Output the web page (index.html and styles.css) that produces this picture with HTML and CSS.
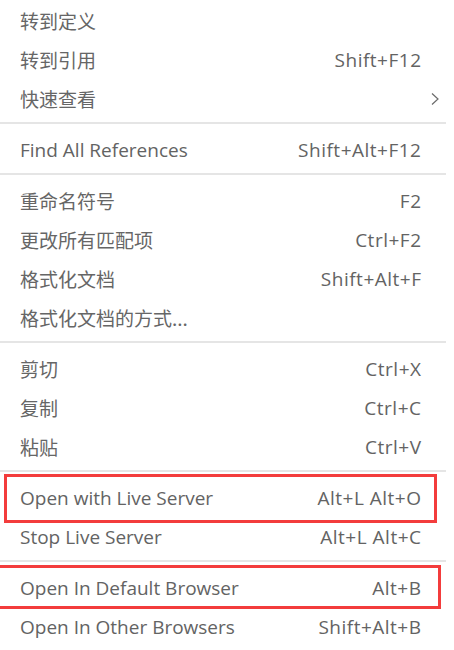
FILE: index.html
```html
<!DOCTYPE html>
<html lang="zh-CN">
<head>
<meta charset="utf-8">
<link rel="stylesheet" href="styles.css">
</head>
<body>
<div class="menu">
  <div class="item"><span class="label cjk">转到定义</span><span class="key"></span></div>
  <div class="item"><span class="label cjk">转到引用</span><span class="key">Shift+F12</span></div>
  <div class="item"><span class="label cjk">快速查看</span><span class="chev"><svg width="10" height="14" viewBox="0 0 10 14"><path d="M2 1.5 L8 7 L2 12.5" fill="none" stroke="#6b6b6b" stroke-width="1.2"/></svg></span></div>
  <div class="sep"></div>
  <div class="item"><span class="label">Find All References</span><span class="key">Shift+Alt+F12</span></div>
  <div class="sep"></div>
  <div class="item"><span class="label cjk">重命名符号</span><span class="key">F2</span></div>
  <div class="item"><span class="label cjk">更改所有匹配项</span><span class="key">Ctrl+F2</span></div>
  <div class="item"><span class="label cjk">格式化文档</span><span class="key">Shift+Alt+F</span></div>
  <div class="item"><span class="label cjk">格式化文档的方式...</span><span class="key"></span></div>
  <div class="sep"></div>
  <div class="item"><span class="label cjk">剪切</span><span class="key">Ctrl+X</span></div>
  <div class="item"><span class="label cjk">复制</span><span class="key">Ctrl+C</span></div>
  <div class="item"><span class="label cjk">粘贴</span><span class="key">Ctrl+V</span></div>
  <div class="sep"></div>
  <div class="item marked mark-a"><span class="label">Open with Live Server</span><span class="key">Alt+L Alt+O</span></div>
  <div class="item"><span class="label">Stop Live Server</span><span class="key">Alt+L Alt+C</span></div>
  <div class="sep"></div>
  <div class="item marked mark-b"><span class="label">Open In Default Browser</span><span class="key">Alt+B</span></div>
  <div class="item"><span class="label">Open In Other Browsers</span><span class="key">Shift+Alt+B</span></div>
</div>
</body>
</html>
```
FILE: styles.css
```css
html, body {
  margin: 0;
  padding: 0;
  background: #ffffff;
}
body {
  font-family: "Open Sans", "Noto Sans CJK SC", sans-serif;
  color: #636363;
  overflow: hidden;
}
.menu {
  width: 446px;
  padding-top: 1px;
}
.item {
  position: relative;
  height: 39px;
  display: flex;
  align-items: center;
  justify-content: space-between;
  padding: 0 25px 0 20px;
  font-size: 19px;
}
.label.cjk {
  font-family: "Noto Sans CJK SC", sans-serif;
  font-size: 19px;
  font-weight: 400;
  color: #666666;
}
.key {
  font-size: 19px;
  letter-spacing: 0.5px;
  margin-right: -0.5px;
}
.chev {
  display: flex;
  margin-right: -19px;
}
.sep {
  height: 12px;
  display: flex;
  align-items: flex-start;
}
.sep::before {
  content: "";
  display: block;
  width: 100%;
  height: 2px;
  margin-top: 4px;
  background: #e5e5e5;
}
.marked::after {
  content: "";
  position: absolute;
  border: 3px solid #f33c3c;
  pointer-events: none;
}
.mark-a::after {
  left: 4px;
  right: 9px;
  top: -4px;
  bottom: -6px;
}
.mark-b::after {
  left: -4px;
  right: 5px;
  top: -3px;
  bottom: -2px;
}
```
